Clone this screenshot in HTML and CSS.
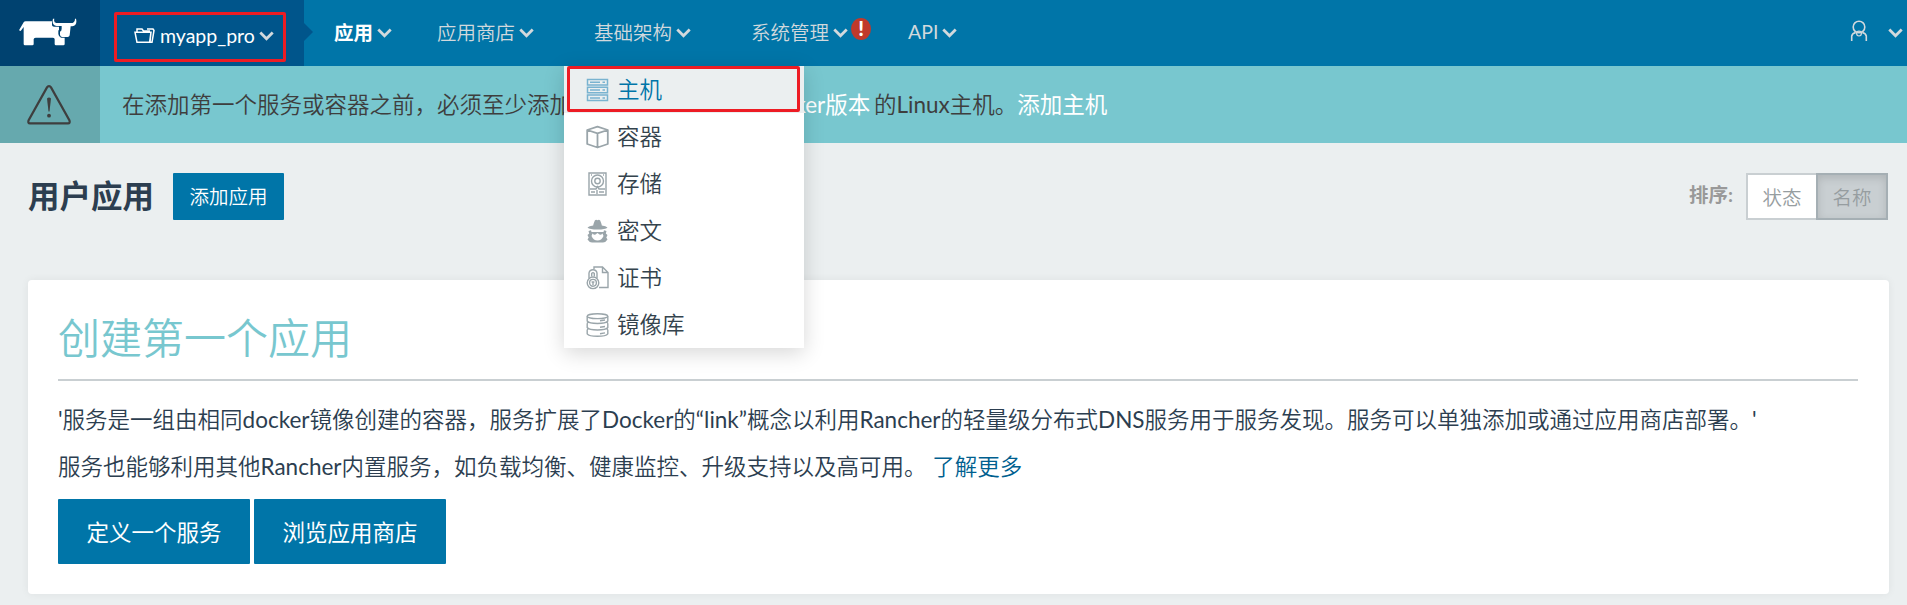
FILE: index.html
```html
<!DOCTYPE html>
<html lang="zh-CN">
<head>
<meta charset="utf-8">
<title>Rancher</title>
<link rel="stylesheet" href="styles.css">
</head>
<body>
<svg class="defs" width="0" height="0">
  <symbol id="chevron" viewBox="0 0 15 10"><path d="M1.3 1.5 7.5 7.7 13.7 1.5" fill="none" stroke="currentColor" stroke-width="2.8"/></symbol>
</svg>
<header class="nav">
  <a class="logo">
    <svg width="58" height="28" viewBox="58 56 174 84"><path fill="#fff" d="M58 93 72 69Q74 66 78 66H157V78Q158 82 163 82H178V93H176V104Q177 113 184 115H195V134Q195 138 191 138H169Q165 138 165 134V120Q165 115 160 115H108Q102 115 102 120V134Q102 138 98 138H76Q72 138 72 134V83L63 95Z"/><path fill="#fff" d="M164 58Q161 70 170 71H210Q226 73 226 58H229Q234 77 218 81H213L210 108Q209 113 204 113H187Q181 112 181 106V97Q186 95 186 88V80H171Q155 78 160 58Z"/></svg>
  </a>
  <a class="project">
    <span class="project-box">
      <svg class="folder" width="21" height="17" viewBox="0 0 21 17"><path d="M3 15.3 1 5.2H17L15.6 15.3ZM3 5V2H8L9.5 4H16M17 5 16 15.3H18L20 3.5 19 2H13" fill="none" stroke="#fff" stroke-width="1.5"/></svg>
      <span>myapp_pro</span>
      <svg class="chevron"><use href="#chevron"/></svg>
    </span>
  </a>
  <nav class="menu">
    <a class="menu-item first active">应用<svg class="chevron"><use href="#chevron"/></svg></a>
    <a class="menu-item">应用商店<svg class="chevron"><use href="#chevron"/></svg></a>
    <a class="menu-item">基础架构<svg class="chevron"><use href="#chevron"/></svg></a>
    <a class="menu-item">系统管理<svg class="chevron"><use href="#chevron"/></svg><span class="alert-badge">!</span></a>
    <a class="menu-item">API<svg class="chevron"><use href="#chevron"/></svg></a>
  </nav>
  <div class="user">
    <svg width="18" height="22" viewBox="0 0 18 22" fill="none" stroke="currentColor" stroke-width="1.6"><circle cx="9" cy="7" r="5.8"/><path d="M1.7 21V16Q2.5 13 5.7 12.6M12.3 12.6Q15.5 13 16.3 16V21"/><circle cx="9" cy="13.6" r="2.4" stroke-width="1.2"/></svg>
    <svg class="chevron"><use href="#chevron"/></svg>
  </div>
  <div class="dropdown">
    <a class="drop-item selected">
      <svg class="icon" viewBox="0 0 23 24" fill="none" stroke="currentColor" stroke-width="1.5"><path d="M1.5 1.5H21.5V7H1.5ZM1.5 9.3H21.5V14.8H1.5ZM1.5 17.1H21.5V22.6H1.5ZM4 4.3H14M16.5 4.3H19M4 12.1H14M16.5 12.1H19M4 19.9H14M16.5 19.9H19"/></svg><span>主机</span></a>
    <a class="drop-item">
      <svg class="icon" viewBox="0 0 23 24" fill="none" stroke="currentColor" stroke-width="1.8" stroke-linejoin="round"><path d="M1.2 5 11.5 1.7 21.8 5V19L11.5 22.5 1.2 19ZM1.2 5 11.5 8.3 21.8 5M11.5 8.3V22.5"/></svg><span>容器</span></a>
    <a class="drop-item">
      <svg class="icon" viewBox="0 0 23 24" fill="none" stroke="currentColor" stroke-width="1.4"><path d="M3 1H20V23H3Z"/><circle cx="11.5" cy="9" r="6"/><circle cx="11.5" cy="9" r="2.7"/><path d="M4 17H10L11.5 14.5 13 17H19M5 20H9M11 18V22M13 20H18M5 3H6M17 3H18"/></svg><span>存储</span></a>
    <a class="drop-item">
      <svg class="icon" viewBox="0 0 23 24" fill="currentColor"><path d="M7.5 5 8.8 1.4Q10 .3 11.5 1.2 13 .3 14.2 1.4L15.5 5 15.8 6.5Q20 7 21.5 8.5 19.5 10.5 11.5 10.5 3.5 10.5 1.5 8.5 3 7 7.2 6.5Z"/><path d="M2.5 12 5 11.2 5.5 13 17.5 13 18 11.2 20.5 12 19.8 14.5 21.5 16 20.3 18.5 21.5 20.5Q19.5 23.6 17 23.6H6Q3.5 23.6 1.5 20.5L2.7 18.5 1.5 16 3.2 14.5Z"/><path fill="#fff" d="M6.5 14.5Q8.5 17 10.5 14.8L11.5 14 12.5 14.8Q14.5 17 16.5 14.5L17.5 17Q15.5 21.5 11.5 21.5 7.5 21.5 5.5 17Z"/></svg><span>密文</span></a>
    <a class="drop-item">
      <svg class="icon" viewBox="0 0 23 24" fill="none" stroke="currentColor" stroke-width="1.4"><path d="M8 3V1H16.5L22 6.5V21.5H13M16.5 1V6.5H22"/><circle cx="7" cy="16.8" r="5.8"/><circle cx="7" cy="16.8" r="3.4"/><path d="M3 12V7Q3.5 3.7 7 3.7T11 7V12M5.7 10.5V7.5Q7 5.8 8.3 7.5V10.5M7 15.2V19M5.6 16H8.4"/></svg><span>证书</span></a>
    <a class="drop-item">
      <svg class="icon" viewBox="0 0 23 24" fill="none" stroke="currentColor" stroke-width="1.4"><ellipse cx="11.5" cy="3.2" rx="10.3" ry="2.4"/><path d="M1.2 3.2V8Q3 10.5 11.5 10.5T21.8 8V3.2M1.2 10.2V14.5Q3 17 11.5 17T21.8 14.5V10.2M1.2 16.7V20.8Q3 23.3 11.5 23.3T21.8 20.8V16.7M1.2 10.2 2.5 8.8M21.8 10.2 20.5 8.8M1.2 16.7 2.5 15.3M21.8 16.7 20.5 15.3M14 7.8 19 7M14 14.3 19 13.5M14 20.7 19 19.9"/></svg><span>镜像库</span></a>
  </div>
</header>
<section class="banner">
  <div class="banner-icon">
    <svg width="46" height="42" viewBox="0 0 46 42"><path d="M23 2.2Q24.3 2.2 25 3.4L43.5 36.5Q44.3 39.3 42 39.4H4Q1.7 39.3 2.5 36.5L21 3.4Q21.7 2.2 23 2.2Z" fill="none" stroke="#3e3e3e" stroke-width="2.2"/><path fill="#3e3e3e" d="M21 14.5Q23 12.5 25 14.5L23.5 27.5H22.5Z"/><circle cx="23" cy="31.7" r="1.9" fill="#3e3e3e"/></svg>
  </div>
  <p class="banner-text"><span class="banner-lead">在添加第一个服务或容器之前&#xff0c;必须至少添加一台安装有支持的</span><a class="banner-link version">Docker版本</a><span class="banner-tail">的Linux主机。</span><a class="banner-link">添加主机</a></p>
</section>
<main>
  <div class="toolbar">
    <h1>用户应用</h1>
    <button class="btn">添加应用</button>
    <span class="sort-label">排序:</span>
    <div class="group"><button class="sort">状态</button><button class="sort on">名称</button></div>
  </div>
  <section class="card">
    <h2>创建第一个应用</h2>
    <hr>
    <p>'服务是一组由相同docker镜像创建的容器&#xff0c;服务扩展了Docker的“link”概念以利用Rancher的轻量级分布式DNS服务用于服务发现。服务可以单独添加或通过应用商店部署。'</p>
    <p>服务也能够利用其他Rancher内置服务&#xff0c;如负载均衡、健康监控、升级支持以及高可用。 <a>了解更多</a></p>
    <div class="actions"><button class="btn large">定义一个服务</button><button class="btn large">浏览应用商店</button></div>
  </section>
</main>
</body>
</html>
```
FILE: styles.css
```css
*, *::after { box-sizing: border-box; }
body {
  margin: 0;
  height: 605px;
  overflow: hidden;
  background: #ebeff0;
  color: #2c3e50;
  font-family: Lato, "Noto Sans CJK SC DemiLight", "Noto Sans CJK SC", sans-serif;
  font-size: 22.5px;
  font-weight: 400;
}
h1, h2, p { margin: 0; }
button { font-family: inherit; border: 0; padding: 0; }
h1, .active, .banner-link, .large, .sort-label { font-family: Lato, "Noto Sans CJK SC", sans-serif; }
.defs { position: absolute; }
.nav {
  position: relative;
  z-index: 2;
  display: flex;
  height: 66px;
  background: #0075a8;
  color: #d2d9dd;
  font-size: 19.5px;
}
.logo { width: 100px; padding: 18px 0 0 19px; background: #004270; }
.logo svg, .icon, .chevron { display: block; flex: none; }
.chevron { width: 15px; height: 10px; margin: 4px 0 0 4px; }
.project { position: relative; width: 204px; padding: 12px 0 0 14px; background: #00558b; }
.project::after {
  content: "";
  position: absolute;
  left: 204px;
  top: 23px;
  border: 9px solid transparent;
  border-right: 0;
  border-left-color: #00558b;
}
.project-box {
  display: flex;
  align-items: center;
  width: 172px;
  height: 50px;
  padding: 0 0 3px 17px;
  border: 3px solid #ed1c24;
  border-radius: 2px;
  color: #fff;
}
.folder { margin-right: 5px; }
.project .chevron { margin: 0 0 0 4px; color: #d2d9dd; }
.menu { display: flex; padding-left: 30px; }
.menu-item { display: flex; align-items: center; width: 157px; height: 62px; white-space: nowrap; }
.menu-item.first { width: 103px; }
.menu-item.active { color: #fff; font-weight: 700; }
.menu-item.active .chevron { color: #d2d9dd; }
.alert-badge {
  width: 20px;
  height: 22px;
  margin: -4px 0 0 3px;
  border-radius: 50%;
  background: #c0392b;
  color: #fff;
  font-size: 20px;
  font-weight: 900;
  line-height: 21px;
  text-align: center;
}
.user { display: flex; align-items: center; gap: 16px; height: 62px; margin-left: auto; padding-right: 4px; }
.dropdown {
  position: absolute;
  left: 564px;
  top: 66px;
  width: 240px;
  background: #fff;
  box-shadow: 0 5px 20px rgba(0, 0, 0, .16);
  color: #34434d;
  font-size: 22.5px;
}
.drop-item { position: relative; display: flex; align-items: center; gap: 8px; height: 47px; padding-left: 22px; }
.drop-item span { padding-bottom: 4px; }
.icon { width: 23px; height: 24px; color: #9aa5aa; }
.selected { background: #ebeff0; color: #0075a8; }
.selected .icon { color: #79b3d0; }
.selected::after {
  content: "";
  position: absolute;
  left: 3px;
  top: 0;
  width: 233px;
  height: 46px;
  border: 3px solid #ed1c24;
  border-radius: 2px;
}
.banner { display: flex; height: 77px; background: #78c7cf; color: #3e3e3e; }
.banner-icon { width: 100px; padding: 18px 0 0 26px; background: #66a9ae; }
.banner-text { display: flex; align-items: center; padding: 0 0 4px 22px; white-space: nowrap; }
.banner-link { color: #fff; }
.banner-lead { width: 632px; }
.version { width: 116px; margin-right: 4px; text-align: right; }
.toolbar { display: flex; height: 137px; padding: 30px 19px 0 28px; }
h1 { width: 145px; font-size: 31.5px; line-height: 47px; }
.btn { border-radius: 1px; background: #0075a8; color: #fff; }
.toolbar .btn { width: 111px; height: 47px; padding-bottom: 2px; font-size: 19.5px; }
.sort-label { margin-left: auto; width: 57px; color: #999; font-size: 19.5px; font-weight: 700; line-height: 43px; }
.group { display: flex; height: 47px; }
.sort { width: 70px; padding-bottom: 1px; border: 2px solid #c9cfd2; border-right: 0; background: #fff; color: #969da0; font-size: 19.5px; }
.sort.on { width: 72px; border: 2px solid #a5afb4; background: #c9cfd2; box-shadow: inset 0 3px 8px rgba(0, 0, 0, .13); }
.card {
  width: 1861px;
  height: 314px;
  margin-left: 28px;
  padding: 29px 31px 0 30px;
  border-radius: 4px;
  background: #fff;
  box-shadow: 0 0 8px rgba(0, 0, 0, .06);
}
h2 { height: 70px; color: #78c7cf; font-size: 42px; font-weight: 400; line-height: 59px; }
hr { height: 2px; margin: 0 0 15px; border: 0; background: #c9cfd2; }
.card p { height: 47px; line-height: 47px; white-space: nowrap; }
.card a { color: #005f8f; }
.actions { display: flex; gap: 4px; padding-top: 9px; }
.large { width: 192px; height: 65px; padding-bottom: 2px; font-size: 22.5px; font-weight: 400; }
```
